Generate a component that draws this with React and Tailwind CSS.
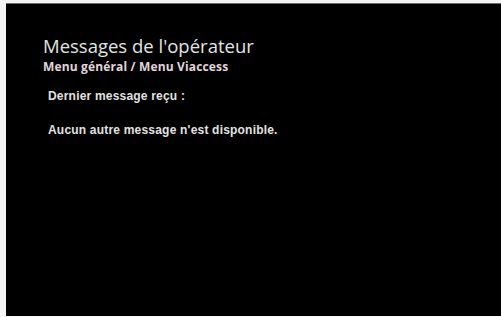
export default function App() {
  return (
    <div className="w-[501px] h-[317px] bg-[#f4f4f4] pl-[6px] pt-[3px] pb-[1px] overflow-hidden">
      <div className="h-full bg-black border-t border-[#6a6a74] pl-[37px] pt-[33px]">
        {/* header */}
        <h1
          className="text-[18.5px] leading-[18.5px] text-[#e4e4e4] font-normal"
          style={{ fontFamily: "'Open Sans', 'DejaVu Sans', sans-serif" }}
        >
          Messages de l'opérateur
        </h1>
        <p
          className="mt-[5px] text-[12px] leading-[12px] font-bold tracking-[0.15px] text-[#e2d4dc]"
          style={{ fontFamily: "'Open Sans', 'DejaVu Sans', sans-serif" }}
        >
          Menu général / Menu Viaccess
        </p>

        {/* body */}
        <div className="pl-[5px] pt-[17px] font-bold text-[12px] leading-[12px] tracking-[0.2px] text-[#e2e2e2] font-['Liberation_Sans',Arial,sans-serif]">
          <p>Dernier message reçu :</p>
          <p className="mt-[22px]">Aucun autre message n'est disponible.</p>
        </div>
      </div>
    </div>
  );
}
